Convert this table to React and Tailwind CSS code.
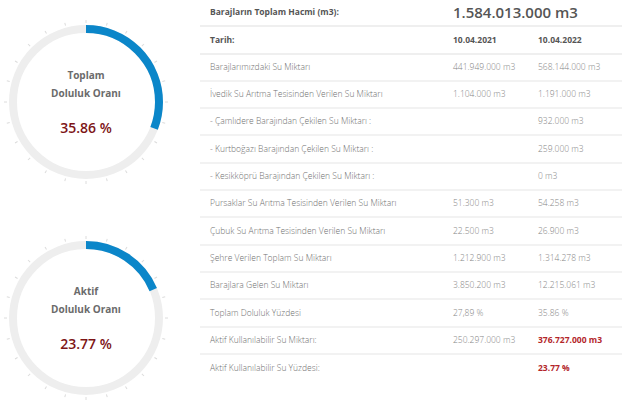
import React from 'react';

const rows = [
  { label: 'Barajlarımızdaki Su Miktarı', a: '441.949.000 m3', b: '568.144.000 m3' },
  { label: 'İvedik Su Arıtma Tesisinden Verilen Su Miktarı', a: '1.104.000 m3', b: '1.191.000 m3' },
  { label: '- Çamlıdere Barajından Çekilen Su Miktarı :', a: '', b: '932.000 m3' },
  { label: '- Kurtboğazı Barajından Çekilen Su Miktarı :', a: '', b: '259.000 m3' },
  { label: '- Kesikköprü Barajından Çekilen Su Miktarı :', a: '', b: '0 m3' },
  { label: 'Pursaklar Su Arıtma Tesisinden Verilen Su Miktarı', a: '51.300 m3', b: '54.258 m3' },
  { label: 'Çubuk Su Arıtma Tesisinden Verilen Su Miktarı', a: '22.500 m3', b: '26.900 m3' },
  { label: 'Şehre Verilen Toplam Su Miktarı', a: '1.212.900 m3', b: '1.314.278 m3' },
  { label: 'Barajlara Gelen Su Miktarı', a: '3.850.200 m3', b: '12.215.061 m3' },
  { label: 'Toplam Doluluk Yüzdesi', a: '27,89 %', b: '35.86 %' },
  { label: 'Aktif Kullanılabilir Su Miktarı:', a: '250.297.000 m3', b: '376.727.000 m3', red: true },
  { label: 'Aktif Kullanılabilir Su Yüzdesi:', a: '', b: '23.77 %', red: true, last: true },
];

function Gauge({ title, value, angle }) {
  const r = 73;
  const c = 2 * Math.PI * r;
  const ticks = Array.from({ length: 24 }, (_, i) => i * 15);
  return (
    <div className="relative w-[170px] h-[170px]">
      <svg width="170" height="170" viewBox="0 0 170 170">
        {ticks.map((t) => (
          <line
            key={t}
            x1="85"
            y1="3"
            x2="85"
            y2="6"
            stroke="#dcdcdc"
            strokeWidth="1"
            transform={`rotate(${t} 85 85)`}
          />
        ))}
        <circle cx="85" cy="85" r={r} fill="none" stroke="#eeeeee" strokeWidth="8" />
        <circle
          cx="85"
          cy="85"
          r={r}
          fill="none"
          stroke="#0b86c9"
          strokeWidth="8"
          strokeDasharray={`${(c * angle) / 360} ${c}`}
          transform="rotate(-90 85 85)"
        />
      </svg>
      <div className="absolute inset-0 flex flex-col items-center pt-[49px]">
        <div className="text-[10px] font-bold text-[#6b6b6b] leading-[18px]">{title}</div>
        <div className="text-[10px] font-bold text-[#6b6b6b] leading-[18px]">Doluluk Oranı</div>
        <div className="mt-[17px] text-[14px] font-semibold text-[#7d1416] leading-[18px]">{value}</div>
      </div>
    </div>
  );
}

export default function App() {
  return (
    <div className="w-[640px] h-[401px] bg-white flex font-['Open_Sans',sans-serif] overflow-hidden">
      <div className="w-[200px] flex flex-col pl-[1px] pt-[17px] gap-[46px]">
        <Gauge title="Toplam" value="35.86 %" angle={111} />
        <Gauge title="Aktif" value="23.77 %" angle={67} />
      </div>
      <div className="w-[422px]">
        <div className="flex items-center h-[27.3px] border-b-2 border-[#efefef]">
          <div className="w-[243px] pl-[10px] text-[8.5px] font-bold text-[#555]">Barajların Toplam Hacmi (m3):</div>
          <div className="pl-[10px] text-[15px] font-semibold text-[#555]">1.584.013.000 m3</div>
        </div>
        <div className="flex items-center h-[27.3px] border-b-2 border-[#efefef]">
          <div className="w-[243px] pl-[10px] text-[8.5px] font-bold text-[#555]">Tarih:</div>
          <div className="w-[85px] pl-[10px] text-[8.5px] font-bold text-[#555]">10.04.2021</div>
          <div className="pl-[10px] text-[8.5px] font-bold text-[#555]">10.04.2022</div>
        </div>
        {rows.map((row) => (
          <div
            key={row.label}
            className={`flex items-center h-[27.3px] ${row.last ? '' : 'border-b-2 border-[#f2f2f2]'}`}
          >
            <div className="w-[243px] pl-[10px] text-[8.5px] font-light text-[#707070]">{row.label}</div>
            <div className="w-[85px] pl-[10px] text-[8.5px] font-light text-[#858585]">{row.a}</div>
            <div
              className={`pl-[10px] text-[8.5px] ${row.red ? 'font-bold text-[#b3262a]' : 'font-light text-[#858585]'}`}
            >
              {row.b}
            </div>
          </div>
        ))}
      </div>
    </div>
  );
}
